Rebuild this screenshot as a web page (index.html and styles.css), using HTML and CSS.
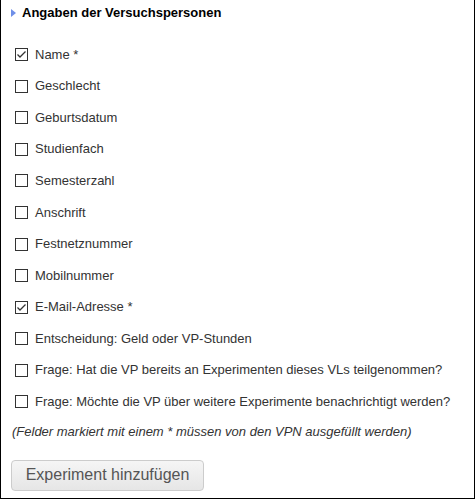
FILE: index.html
```html
<!DOCTYPE html>
<html>
<head>
<meta charset="utf-8">
<link rel="stylesheet" href="styles.css">
</head>
<body>
<div class="panel">
  <div class="legend">
    <svg class="tri" width="5" height="8" viewBox="0 0 5 8"><path d="M0 0 L5 4 L0 8 Z" fill="#6f8fe8"/></svg>
    <span>Angaben der Versuchspersonen</span>
  </div>
  <ul class="fields">
    <li><span class="cb checked"><svg viewBox="0 0 13 13" width="13" height="13"><path d="M2.5 6.5 L5 9 L10.5 3.5" fill="none" stroke="#333" stroke-width="1.3"/></svg></span>Name *</li>
    <li><span class="cb"></span>Geschlecht</li>
    <li><span class="cb"></span>Geburtsdatum</li>
    <li><span class="cb"></span>Studienfach</li>
    <li><span class="cb"></span>Semesterzahl</li>
    <li><span class="cb"></span>Anschrift</li>
    <li><span class="cb"></span>Festnetznummer</li>
    <li><span class="cb"></span>Mobilnummer</li>
    <li><span class="cb checked"><svg viewBox="0 0 13 13" width="13" height="13"><path d="M2.5 6.5 L5 9 L10.5 3.5" fill="none" stroke="#333" stroke-width="1.3"/></svg></span>E-Mail-Adresse *</li>
    <li><span class="cb"></span>Entscheidung: Geld oder VP-Stunden</li>
    <li><span class="cb"></span>Frage: Hat die VP bereits an Experimenten dieses VLs teilgenommen?</li>
    <li><span class="cb"></span>Frage: Möchte die VP über weitere Experimente benachrichtigt werden?</li>
  </ul>
  <p class="note">(Felder markiert mit einem * müssen von den VPN ausgefüllt werden)</p>
  <button class="btn" type="button">Experiment hinzufügen</button>
</div>
</body>
</html>
```
FILE: styles.css
```css
html, body {
  margin: 0;
  padding: 0;
  background: #fff;
}
body {
  font-family: "Liberation Sans", Arial, sans-serif;
  color: #333;
}
.panel {
  width: 475px;
  height: 499px;
  box-sizing: border-box;
  border-left: 1px solid #000;
  border-right: 1px solid #000;
  border-bottom: 1px solid #000;
}
.legend {
  display: flex;
  align-items: center;
  gap: 6px;
  padding: 4px 0 0 10px;
  height: 17px;
  font-size: 13px;
  font-weight: bold;
  color: #000;
}
.tri { display: block; }
.fields {
  list-style: none;
  margin: 0;
  padding: 18px 0 0 14px;
}
.fields li {
  display: flex;
  align-items: center;
  height: 31.55px;
  font-size: 13px;
  line-height: 16px;
}
.cb {
  width: 13px;
  height: 13px;
  box-sizing: border-box;
  border: 1px solid #333;
  background: #fff;
  margin-right: 7px;
  flex: none;
  position: relative;
}
.cb svg {
  position: absolute;
  left: -1px;
  top: -1px;
}
.note {
  margin: 0;
  padding: 6px 0 0 11px;
  font-size: 13px;
  font-style: italic;
  line-height: 16px;
}
.btn {
  display: block;
  margin: 20px 0 0 10px;
  width: 193px;
  height: 31px;
  border: 1px solid #ccc;
  border-radius: 4px;
  background: linear-gradient(#f5f5f5, #e6e6e6);
  font-family: "Liberation Sans", Arial, sans-serif;
  font-size: 16px;
  color: #555;
  padding: 0;
}
```
